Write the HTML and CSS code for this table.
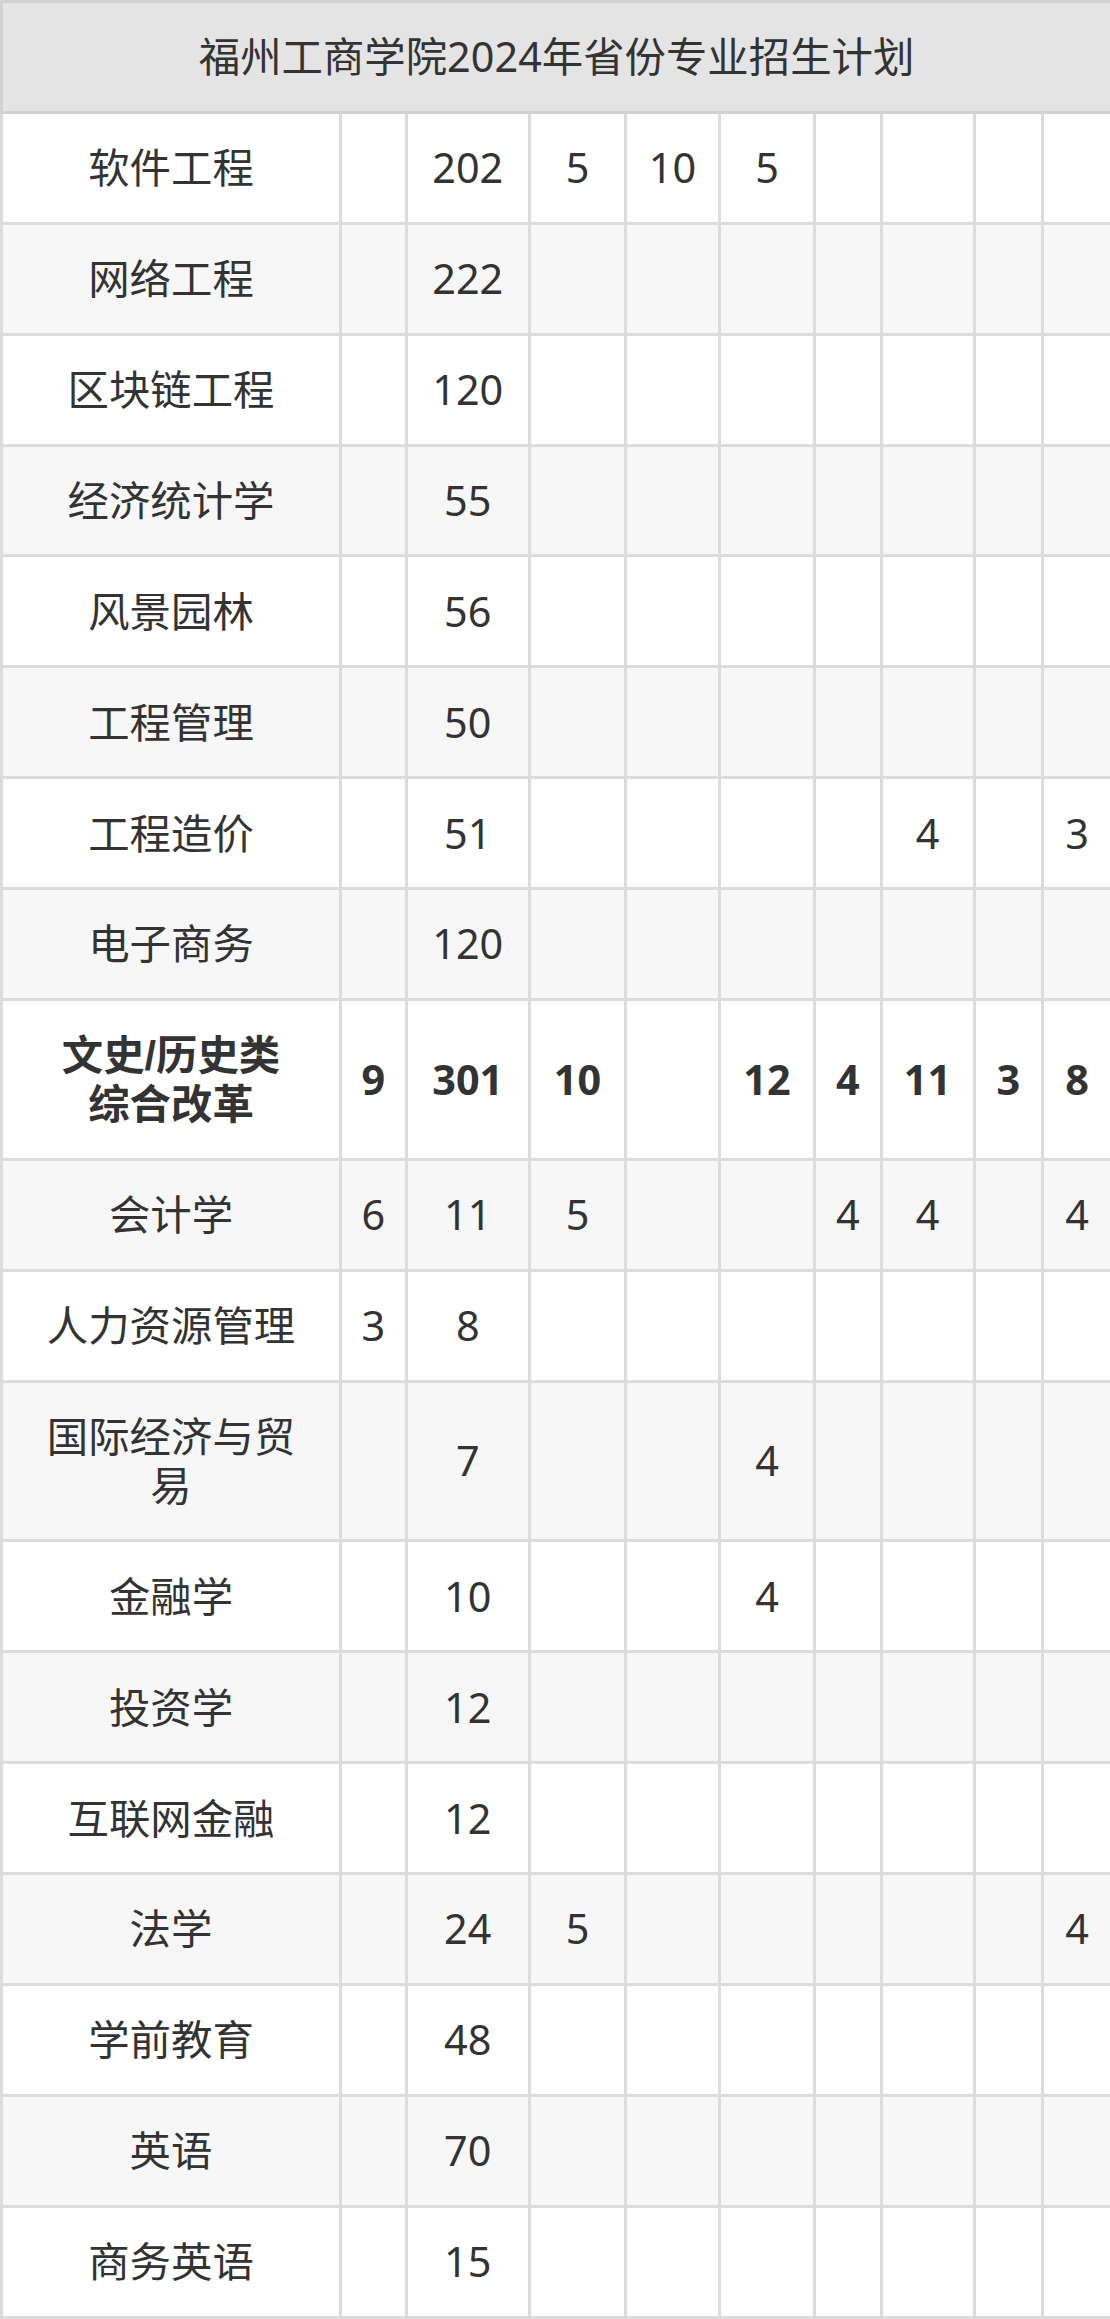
FILE: index.html
```html
<!DOCTYPE html>
<html lang="zh-CN">
<head>
<meta charset="utf-8">
<title>福州工商学院2024年省份专业招生计划</title>
<link rel="stylesheet" href="styles.css">
</head>
<body>
<table class="plan">
  <colgroup>
    <col class="c-name"><col class="c2"><col class="c3"><col class="c4"><col class="c5">
    <col class="c6"><col class="c7"><col class="c8"><col class="c9"><col class="c10">
  </colgroup>
  <thead>
    <tr><th colspan="10" class="title">福州工商学院2024年省份专业招生计划</th></tr>
  </thead>
  <tbody>
    <tr><td>软件工程</td><td></td><td>202</td><td>5</td><td>10</td><td>5</td><td></td><td></td><td></td><td></td></tr>
    <tr><td>网络工程</td><td></td><td>222</td><td></td><td></td><td></td><td></td><td></td><td></td><td></td></tr>
    <tr><td>区块链工程</td><td></td><td>120</td><td></td><td></td><td></td><td></td><td></td><td></td><td></td></tr>
    <tr><td>经济统计学</td><td></td><td>55</td><td></td><td></td><td></td><td></td><td></td><td></td><td></td></tr>
    <tr><td>风景园林</td><td></td><td>56</td><td></td><td></td><td></td><td></td><td></td><td></td><td></td></tr>
    <tr><td>工程管理</td><td></td><td>50</td><td></td><td></td><td></td><td></td><td></td><td></td><td></td></tr>
    <tr><td>工程造价</td><td></td><td>51</td><td></td><td></td><td></td><td></td><td>4</td><td></td><td>3</td></tr>
    <tr><td>电子商务</td><td></td><td>120</td><td></td><td></td><td></td><td></td><td></td><td></td><td></td></tr>
    <tr class="group"><td><span class="ln">文史/历史类</span><span class="ln">综合改革</span></td><td>9</td><td>301</td><td>10</td><td></td><td>12</td><td>4</td><td>11</td><td>3</td><td>8</td></tr>
    <tr><td>会计学</td><td>6</td><td>11</td><td>5</td><td></td><td></td><td>4</td><td>4</td><td></td><td>4</td></tr>
    <tr><td>人力资源管理</td><td>3</td><td>8</td><td></td><td></td><td></td><td></td><td></td><td></td><td></td></tr>
    <tr><td><span class="ln">国际经济与贸</span><span class="ln">易</span></td><td></td><td>7</td><td></td><td></td><td>4</td><td></td><td></td><td></td><td></td></tr>
    <tr><td>金融学</td><td></td><td>10</td><td></td><td></td><td>4</td><td></td><td></td><td></td><td></td></tr>
    <tr><td>投资学</td><td></td><td>12</td><td></td><td></td><td></td><td></td><td></td><td></td><td></td></tr>
    <tr><td>互联网金融</td><td></td><td>12</td><td></td><td></td><td></td><td></td><td></td><td></td><td></td></tr>
    <tr><td>法学</td><td></td><td>24</td><td>5</td><td></td><td></td><td></td><td></td><td></td><td>4</td></tr>
    <tr><td>学前教育</td><td></td><td>48</td><td></td><td></td><td></td><td></td><td></td><td></td><td></td></tr>
    <tr><td>英语</td><td></td><td>70</td><td></td><td></td><td></td><td></td><td></td><td></td><td></td></tr>
    <tr><td>商务英语</td><td></td><td>15</td><td></td><td></td><td></td><td></td><td></td><td></td><td></td></tr>
  </tbody>
</table>
</body>
</html>
```
FILE: styles.css
```css
html, body {
  margin: 0;
  padding: 0;
  background: #ffffff;
}

.plan {
  width: 1110px;
  border-collapse: collapse;
  table-layout: fixed;
  font-family: "Noto Sans", "Noto Sans CJK SC", sans-serif;
  font-size: 41.4px;
  line-height: 49px;
  color: #333333;
}

.c-name { width: 339px; }
.c2 { width: 65.5px; }
.c3 { width: 123.5px; }
.c4 { width: 96px; }
.c5 { width: 94px; }
.c6 { width: 95px; }
.c7 { width: 66.5px; }
.c8 { width: 93px; }
.c9 { width: 68.7px; }
.c10 { width: 68.8px; }

.plan th,
.plan td {
  border: 3px solid #dcdcdc;
  padding: 29.45px 0;
  text-align: center;
  vertical-align: middle;
  font-weight: 400;
}

.plan td:first-child {
  padding: 29.45px 24px;
}

.plan .title {
  background: #e4e4e4;
  border-color: #d2d2d2;
  font-weight: 400;
}

.plan tbody tr:nth-child(even) td {
  background: #f7f7f7;
}

.plan tr.group td {
  font-weight: 700;
}

.plan .ln {
  display: block;
  box-sizing: border-box;
  height: 49px;
  padding-top: 1.7px;
  line-height: 49px;
  font-family: "Liberation Sans", "Noto Sans CJK SC", sans-serif;
  white-space: nowrap;
}
```
